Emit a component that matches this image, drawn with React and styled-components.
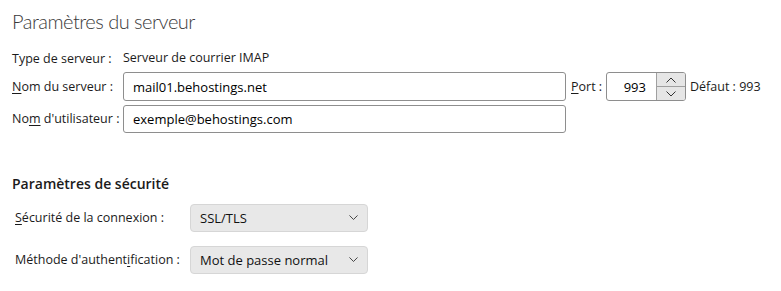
import React from 'react';
import styled, { createGlobalStyle } from 'styled-components';

const GlobalStyle = createGlobalStyle`
  html, body {
    margin: 0;
    background: #ffffff;
    font-family: 'Open Sans', 'Noto Sans', sans-serif;
    color: #1b1b1b;
  }
`;

const Page = styled.div`
  width: 781px;
  height: 291px;
  box-sizing: border-box;
  padding: 7px 12px 0 12px;
  font-size: 12.5px;
`;

const Title = styled.h1`
  margin: 0;
  font-family: 'Lato', 'Open Sans', sans-serif;
  font-size: 20px;
  font-weight: 300;
  line-height: 28px;
  letter-spacing: -0.5px;
  color: #3a3a3a;
`;

const ServerGrid = styled.div`
  margin-top: 14px;
  display: grid;
  grid-template-columns: 111px 443px 40px 80px auto;
  row-gap: 4px;
  align-items: center;
`;

const Label = styled.label`
  white-space: nowrap;
  line-height: 18px;
  padding-left: ${(p) => p.indent || 0}px;
`;

const Value = styled.span`
  grid-column: 2 / span 4;
  line-height: 18px;
  margin-bottom: 1px;
`;

const Key = styled.u`
  text-underline-offset: 2px;
`;

const TextField = styled.div`
  box-sizing: border-box;
  height: ${(p) => p.h || 29}px;
  border: 1px solid #8e8e8e;
  border-radius: 3px;
  background: #fff;
  display: flex;
  align-items: center;
  padding-left: 9px;
  font-size: 13px;
  color: #000;
`;

const PortLabel = styled(Label)`
  padding-left: 5px;
`;

const PortBox = styled.div`
  box-sizing: border-box;
  height: 29px;
  border: 1px solid #8e8e8e;
  border-radius: 3px;
  background: #fff;
  display: flex;
  align-items: stretch;
  overflow: hidden;
`;

const PortValue = styled.span`
  flex: 1;
  display: flex;
  align-items: center;
  justify-content: flex-end;
  padding-right: 10px;
  font-size: 13px;
  color: #000;
`;

const Spin = styled.div`
  width: 28px;
  display: flex;
  flex-direction: column;
  border-left: 1px solid #a0a0a0;
`;

const SpinButton = styled.div`
  flex: 1;
  display: flex;
  align-items: center;
  justify-content: center;
  background: #e6e6e6;
  border-top: ${(p) => (p.bottom ? '1px solid #a0a0a0' : 'none')};
`;

const Default = styled.span`
  padding-left: 4px;
  white-space: nowrap;
`;

const SectionTitle = styled.h2`
  margin: 41px 0 0 0;
  font-size: 14px;
  font-weight: 600;
  line-height: 20px;
  color: #1b1b1b;
`;

const SelectGrid = styled.div`
  margin-top: 10px;
  display: grid;
  grid-template-columns: 178px 178px;
  row-gap: 14px;
  align-items: center;
`;

const Select = styled.div`
  box-sizing: border-box;
  height: 28px;
  background: #e8e8e8;
  border: 1px solid #d6d6d6;
  border-radius: 4px;
  display: flex;
  align-items: center;
  justify-content: space-between;
  padding: 0 9px 0 9px;
  font-size: 13px;
  color: #111;
`;

const Chevron = ({ up, size = 10 }) => (
  <svg width={size} height={size * 0.6} viewBox="0 0 10 6" fill="none">
    <path
      d={up ? 'M0.5 5.5 L5 1 L9.5 5.5' : 'M0.5 0.5 L5 5 L9.5 0.5'}
      stroke="#333"
      strokeWidth="1"
    />
  </svg>
);

export default function App() {
  return (
    <Page>
      <GlobalStyle />
      <Title>Paramètres du serveur</Title>
      <ServerGrid>
        <Label>Type de serveur :</Label>
        <Value>Serveur de courrier IMAP</Value>

        <Label>
          <Key>N</Key>om du serveur :
        </Label>
        <TextField>mail01.behostings.net</TextField>
        <PortLabel>
          <Key>P</Key>ort :
        </PortLabel>
        <PortBox>
          <PortValue>993</PortValue>
          <Spin>
            <SpinButton>
              <Chevron up size={10} />
            </SpinButton>
            <SpinButton bottom>
              <Chevron size={10} />
            </SpinButton>
          </Spin>
        </PortBox>
        <Default>Défaut : 993</Default>

        <Label>
          No<Key>m</Key> d'utilisateur :
        </Label>
        <TextField h={28}>exemple@behostings.com</TextField>
      </ServerGrid>

      <SectionTitle>Paramètres de sécurité</SectionTitle>
      <SelectGrid>
        <Label indent={3}>
          <Key>S</Key>écurité de la connexion :
        </Label>
        <Select>
          SSL/TLS
          <Chevron size={9} />
        </Select>
        <Label indent={3}>
          Méthode d'authent<Key>i</Key>fication :
        </Label>
        <Select>
          Mot de passe normal
          <Chevron size={9} />
        </Select>
      </SelectGrid>
    </Page>
  );
}
